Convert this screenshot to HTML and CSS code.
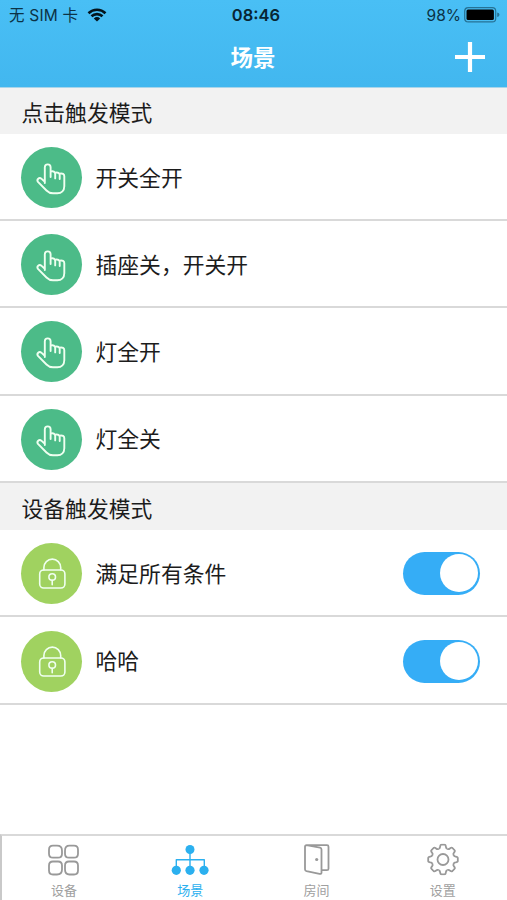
FILE: index.html
```html
<!DOCTYPE html>
<html lang="zh-CN">
<head>
<meta charset="utf-8">
<title>场景</title>
<link rel="stylesheet" href="styles.css">
</head>
<body>
<svg class="defs" width="0" height="0">
  <symbol id="hand" viewBox="0 0 61 61">
    <path d="M23.8 36V20.300a2.900 2.900 0 0 1 5.800 0V30M29.600 24.600c2.600-1 4.600.1 4.600 2.500v4.300M34.200 25.700c2.600-.7 4.500.3 4.500 2.600v3.700M38.700 26.600c2.900-.6 4.600.5 4.600 2.700v10c0 4.300-2.700 7-7 7h-4.300c-3 0-4.700-1-6.500-2.800L17.200 35.100c-1-1.200-.9-2.600 0-3.400 1-.9 2.400-.7 3.400.2l3.200 2.900"/>
  </symbol>
  <symbol id="lock" viewBox="0 0 61 61">
    <rect x="18.700" y="27" width="25.200" height="18" rx="4"/>
    <path d="M22.900 27v-2.500a8.400 8.400 0 0 1 16.800 0V27M31.200 37.400v4.400"/>
    <circle cx="31.200" cy="34" r="3.300"/>
  </symbol>
  <symbol id="tooth" viewBox="-16 -16 32 32">
    <path d="M-4.400-10.600Q-3-11-2.900-12.600Q-2.700-14.800-1.500-14.800H1.500Q2.700-14.800 2.900-12.600Q3-11 4.400-10.600"/>
  </symbol>
</svg>
<div class="screen">
  <header class="header">
    <div class="status">
      <div class="carrier"><span>无 SIM 卡</span>
        <svg class="wifi" viewBox="0 0 20 14"><path d="M1.500 5.200a12.200 12.200 0 0 1 17 0M4.500 8.300a8 8 0 0 1 11 0"/><path class="wifi-dot" d="M6.800 10.400a4.700 4.700 0 0 1 6.400 0L10 13.600z"/></svg>
      </div>
      <div class="time">08:46</div>
      <div class="power"><span>98%</span>
        <svg class="battery" viewBox="0 0 36 16"><rect class="shell" x=".7" y=".7" width="31" height="14.200" rx="3.500"/><rect x="2.500" y="2.500" width="27.400" height="10.600" rx="1.500"/><path class="cap" d="M33.200 5.500q2.300.5 2.300 2.300t-2.300 2.300z"/></svg>
      </div>
    </div>
    <div class="nav">
      <h1>场景</h1>
      <svg class="add" viewBox="0 0 30 30"><path d="M15 0v30M0 15h30"/></svg>
    </div>
  </header>
  <main>
    <h2>点击触发模式</h2>
    <ul>
      <li><svg class="icon hand"><use href="#hand"/></svg><span>开关全开</span></li>
      <li><svg class="icon hand"><use href="#hand"/></svg><span>插座关，开关开</span></li>
      <li><svg class="icon hand"><use href="#hand"/></svg><span>灯全开</span></li>
      <li><svg class="icon hand"><use href="#hand"/></svg><span>灯全关</span></li>
    </ul>
    <h2 class="second">设备触发模式</h2>
    <ul>
      <li><svg class="icon lock"><use href="#lock"/></svg><span>满足所有条件</span><i class="toggle"></i></li>
      <li><svg class="icon lock"><use href="#lock"/></svg><span>哈哈</span><i class="toggle"></i></li>
    </ul>
  </main>
  <nav class="tabs">
    <a class="tab">
      <svg viewBox="0 0 40 36"><path d="M9 3.700h4q5 0 5 5v3q0 4-4 4H9q-4 0-4-4v-4q0-4 4-4zM25.500 3.700h4.500q4 0 4 4v4q0 4-4 4h-5q-4 0-4-4v-3q0-5 4.500-5zM9 19.500h5q4 0 4 4v4q0 5-5 5H9q-4 0-4-4v-5q0-4 4-4zM25 19.500h5q4 0 4 4v5q0 4-4 4h-4.500q-4.500 0-4.500-5v-4q0-4 4-4z"/></svg>
      <span>设备</span>
    </a>
    <a class="tab active">
      <svg viewBox="0 0 40 36"><path d="M20 7v21M6.300 28V17.700h28V28"/><g class="nodes"><circle cx="20" cy="7.500" r="4.500"/><circle cx="6.300" cy="28.300" r="4.600"/><circle cx="20" cy="28.300" r="4.600"/><circle cx="34" cy="28.300" r="4.600"/></g></svg>
      <span>场景</span>
    </a>
    <a class="tab">
      <svg viewBox="0 0 40 36"><path d="M9.500 3.200H30q1.500 0 1.500 1.500v22q0 1.500-1.500 1.500h-5M9.500 3.200Q8 3.200 8 4.700v22.500q0 1.500 1.500 1.900l13 2.800q2 .4 2-1.400V7.500q0-1.400-1.500-1.800z"/><circle class="knob" cx="19.700" cy="17.500" r="1.600"/></svg>
      <span>房间</span>
    </a>
    <a class="tab">
      <svg viewBox="-20 -17.500 40 36"><circle r="5.500"/>
        <g><use href="#tooth" x="-16" y="-16" width="32" height="32"/><use href="#tooth" x="-16" y="-16" width="32" height="32" transform="rotate(45)"/><use href="#tooth" x="-16" y="-16" width="32" height="32" transform="rotate(90)"/><use href="#tooth" x="-16" y="-16" width="32" height="32" transform="rotate(135)"/><use href="#tooth" x="-16" y="-16" width="32" height="32" transform="rotate(180)"/><use href="#tooth" x="-16" y="-16" width="32" height="32" transform="rotate(225)"/><use href="#tooth" x="-16" y="-16" width="32" height="32" transform="rotate(270)"/><use href="#tooth" x="-16" y="-16" width="32" height="32" transform="rotate(315)"/></g>
      </svg>
      <span>设置</span>
    </a>
  </nav>
</div>
</body>
</html>
```
FILE: styles.css
```css
* { box-sizing: border-box; }
body {
  margin: 0;
  background: #fff;
  color: #1c1c1c;
  font-family: Inter, "Noto Sans CJK SC", sans-serif;
}
.defs { position: absolute; }
.screen {
  height: 900px;
  display: flex;
  flex-direction: column;
  overflow: hidden;
}
.header {
  height: 88px;
  background: linear-gradient(#49bff5, #42b7ef);
  border-bottom: 1px solid #a9d5ea;
}
.status {
  height: 30px;
  padding: 0 7px 0 9px;
  display: grid;
  grid-template-columns: 1fr auto 1fr;
  align-items: center;
  font-size: 15.500px;
  line-height: 29px;
  color: #0c3346;
}
.carrier, .power { display: flex; align-items: center; }
.carrier span, .power span { padding-top: 1px; }
.carrier { gap: 9px; white-space: nowrap; letter-spacing: .2px; }
.power { justify-content: flex-end; gap: 3px; }
.time { font-weight: 600; font-size: 16.500px; color: #082533; padding-left: 3px; }
.wifi { width: 20px; height: 14px; fill: none; stroke: #04141c; stroke-width: 2.6; }
.wifi .wifi-dot { fill: #04141c; stroke: none; }
.battery { width: 36px; height: 16px; fill: #000; }
.battery .shell { fill: none; stroke: #267295; stroke-width: 1.2; }
.battery .cap { fill: #267295; }
.nav {
  height: 55px;
  display: grid;
  grid-template-columns: 1fr auto 1fr;
  align-items: center;
  padding-right: 22px;
}
h1 {
  grid-column: 2;
  margin: 0 0 0 21px;
  font-size: 22.500px;
  line-height: 32px;
  font-weight: 600;
  color: #fff;
}
.add {
  justify-self: end;
  width: 30px;
  height: 30px;
  margin-top: -2px;
  stroke: #fff;
  stroke-width: 4.2;
}
h2 {
  margin: 0;
  height: 46px;
  padding-left: 21.500px;
  background: #f2f2f2;
  font-size: 21.800px;
  line-height: 50px;
  font-weight: 400;
}
h2.second { height: 47.500px; line-height: 52px; }
ul { margin: 0; padding: 0; list-style: none; }
li {
  height: 87.200px;
  padding: 2px 27px 0 21px;
  display: flex;
  align-items: center;
  border-bottom: 2px solid #d9d9d9;
  font-size: 21.800px;
}
li span { padding-bottom: 3px; }
.icon {
  width: 61px;
  height: 61px;
  margin-right: 13.500px;
  border-radius: 50%;
  fill: none;
  stroke: #effff0;
  stroke-width: 1.9;
  stroke-linejoin: round;
  stroke-linecap: round;
}
.hand { background: #4cbb88; }
.lock { background: #a0d260; stroke-width: 1.6; }
.toggle {
  width: 77px;
  height: 43px;
  margin-left: auto;
  padding: 2px;
  border-radius: 22px;
  background: #35adf6;
  display: flex;
  justify-content: flex-end;
}
.toggle::before {
  content: "";
  width: 38px;
  height: 38px;
  border-radius: 50%;
  background: #fff;
}
.tabs {
  height: 66px;
  margin-top: auto;
  border-top: 2px solid #d9d9d9;
  border-left: 2px solid #c9c9c9;
  display: grid;
  grid-template-columns: repeat(4, 1fr);
}
.tab {
  display: flex;
  flex-direction: column;
  align-items: center;
  padding-top: 6px;
  margin-left: -2px;
  font-size: 13px;
  line-height: 18px;
  color: #a0a0a0;
}
.tab svg {
  width: 40px;
  height: 36px;
  margin-bottom: 3px;
  fill: none;
  stroke: #999;
  stroke-width: 1.8;
  stroke-linejoin: round;
}
.tab.active { color: #2bb0ef; }
.tab.active svg { stroke: #2bb0ef; stroke-width: 1.4; }
.tab .nodes { fill: #2bb0ef; stroke: none; }
.tab .knob { fill: #999; stroke: none; }
```
